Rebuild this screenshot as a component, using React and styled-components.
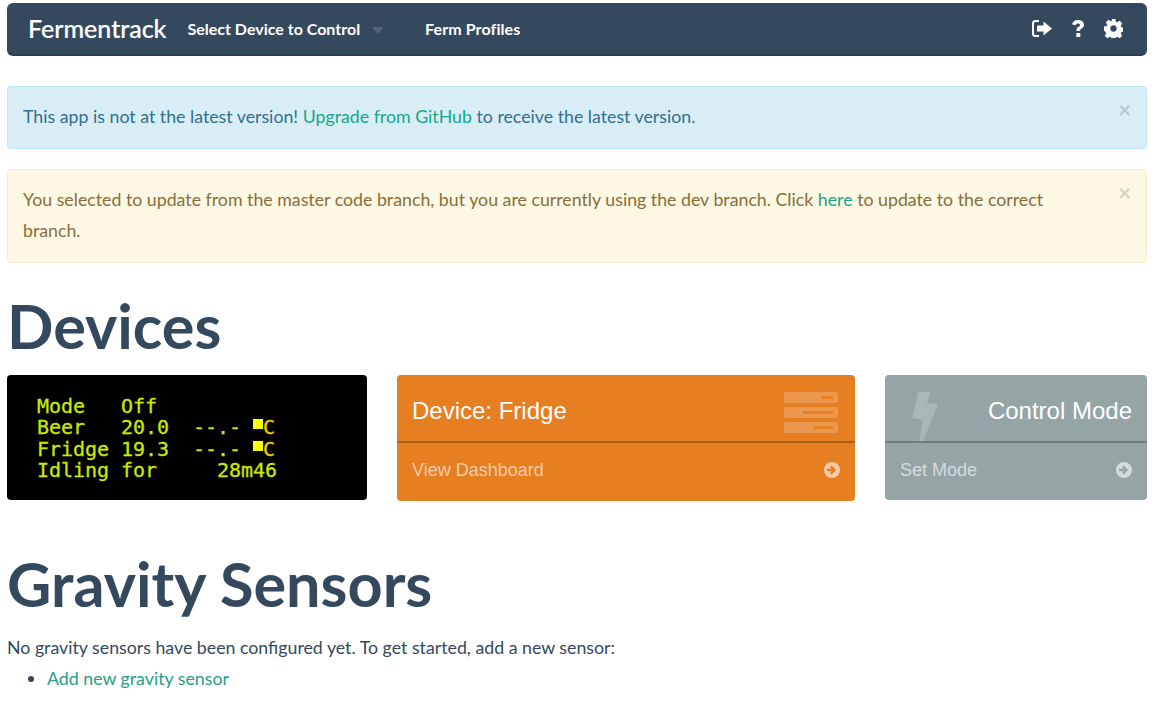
import React from "react";
import styled, { createGlobalStyle } from "styled-components";

const Global = createGlobalStyle`
  html, body { margin: 0; padding: 0; background: #fff; }
  body { font-family: Lato, "Liberation Sans", sans-serif; font-size: 17.75px; line-height: 31px; color: #34495e; }
  * { box-sizing: border-box; }
`;
const Page = styled.div`
  width: 1140px;
  margin-left: 7px;
  padding-top: 3px;
`;
const Navbar = styled.nav`
  display: flex;
  align-items: center;
  height: 53px;
  margin-bottom: 30px;
  background: #34495e;
  border-bottom: 2px solid #2c3e50;
  border-radius: 6px;
  padding: 0 24px 0 21px;
  color: #fff;
`;
const Brand = styled.a`
  font-size: 25px;
  font-weight: 500;
  margin-right: 21px;
  -webkit-text-stroke: 0.2px #fff;
`;
const NavLink = styled.a`
  font-size: 16px;
  font-weight: 700;
  line-height: 20px;
  letter-spacing: ${p => p.$spacing || 0}px;
`;
const Caret = styled.span`
  width: 0;
  height: 0;
  margin: 4px 41px 0 12px;
  border-left: 6px solid transparent;
  border-right: 6px solid transparent;
  border-top: 7px solid #536477;
`;
const NavIcons = styled.div`
  margin-left: auto;
  display: flex;
  align-items: center;
  gap: 20px;
`;
const Alert = styled.div`
  position: relative;
  margin-bottom: 20px;
  padding: 14px 48px 16px 15px;
  border-radius: 4px;
  border: 1px solid ${p => p.$border};
  background: ${p => p.$bg};
  color: ${p => p.$color};
  a { color: #18a689; }
`;
const Close = styled.span`
  position: absolute;
  top: 8px;
  right: 15px;
  font-size: 22px;
  line-height: 30px;
  font-weight: 700;
  color: ${p => p.$color};
`;
const Heading = styled.h1`
  margin: ${p => p.$top}px 0 ${p => p.$bottom}px;
  font-size: 61.2px;
  line-height: 66px;
  font-weight: 700;
  color: #34495e;
`;
const CardRow = styled.div`
  display: grid;
  grid-template-columns: 360px 458px 262px;
  column-gap: 30px;
  align-items: start;
`;
const Lcd = styled.div`
  height: 125px;
  background: #000;
  border-radius: 4px;
  padding: 21px 0 0 30px;
  font-family: "DejaVu Sans Mono", "Liberation Mono", monospace;
  font-size: 20px;
  line-height: 21.3px;
  letter-spacing: -0.04px;
  color: #cbe800;
  -webkit-text-stroke: 0.3px #cbe800;
  white-space: pre;
`;
const LcdLine = styled.div`
  height: 21.3px;
`;
const Degree = styled.span`
  display: inline-block;
  width: 10px;
  height: 10px;
  background: #ffff00;
  vertical-align: 5px;
`;
const Unit = styled.span`
  color: #f0d000;
  -webkit-text-stroke: 0.3px #f0d000;
`;
const Panel = styled.div`
  height: ${p => p.$h}px;
  background: ${p => p.$bg};
  border-radius: 4px;
  color: #fff;
  font-family: "Liberation Sans", Arial, sans-serif;
  overflow: hidden;
`;
const PanelHead = styled.div`
  display: flex;
  justify-content: space-between;
  height: 68px;
  padding: 17px ${p => p.$right}px 0 ${p => p.$left}px;
  border-bottom: 2px solid rgba(0,0,0,.25);
  font-size: 24px;
  line-height: 38px;
`;
const PanelFoot = styled.div`
  display: flex;
  align-items: center;
  justify-content: space-between;
  height: 54px;
  padding: 0 15px;
  font-size: 18px;
  color: rgba(255,255,255,.6);
`;
const Text = styled.p`
  margin: 0;
`;
const Bullets = styled.ul`
  margin: 0;
  padding-left: 40px;
  a { color: #24a088; }
`;
const ServerSvg = styled.svg`
  flex: none;
`;
const BoltSvg = styled.svg`
  flex: none;
`;

const ExitIcon = () => (
  <svg width="20" height="17" viewBox="0 0 20 17" fill="#fff">
    <path d="M7 0H3.5A3.5 3.5 0 0 0 0 3.5v10A3.5 3.5 0 0 0 3.5 17H7v-2H3.5A1.5 1.5 0 0 1 2 13.5v-10A1.5 1.5 0 0 1 3.5 2H7z" />
    <path d="M11.5 1.5 20 8.5l-8.500 7v-4H5v-6h6.500z" />
  </svg>
);
const HelpIcon = () => (
  <svg width="12" height="17" viewBox="0 0 12 17" fill="#fff">
    <path d="M0 4.200C.9 1.500 3 0 6 0c3.300 0 6 2 6 4.700 0 2-1.100 3-2.500 3.900-1 .6-1.300 1-1.300 1.900v.5H4.500v-.9c0-1.700.6-2.500 2-3.400.9-.6 1.600-1 1.600-1.800 0-.9-.9-1.500-2-1.500-1.200 0-2 .6-2.700 1.900z" />
    <rect x="4.300" y="13" width="4" height="4" rx=".5" />
  </svg>
);
const GearIcon = () => (
  <svg width="19" height="19" viewBox="0 0 18 18">
    <path fill="#fff" d="M7.200 0h3.600l.5 2.500 1.400.6 2.100-1.400 2.500 2.500-1.400 2.100.6 1.400 2.500.5v3.600l-2.500.5-.6 1.400 1.400 2.100-2.500 2.500-2.100-1.400-1.400.6-.5 2.500H7.200l-.5-2.500-1.400-.6-2.100 1.400-2.500-2.500 1.400-2.100-.6-1.400L0 10.800V7.200l2.500-.5.600-1.400-1.400-2.100 2.500-2.500 2.100 1.400 1.400-.6z" />
    <circle cx="9" cy="9" r="3" fill="#34495e" />
  </svg>
);
const ArrowCircle = () => (
  <svg width="16" height="16" viewBox="0 0 16 16">
    <path
      fillRule="evenodd"
      fill="#fff"
      fillOpacity=".6"
      d="M8 0a8 8 0 1 1 0 16A8 8 0 0 1 8 0zM3 6.800v2.400h4.800L6 11l1.600 1.600L12.200 8 7.600 3.400 6 5 7.800 6.800z"
    />
  </svg>
);
const ServerIcon = () => (
  <ServerSvg width="54" height="41" viewBox="0 0 54 41">
    <g fill="#fff" fillOpacity=".2" fillRule="evenodd">
      <path d="M1.500 0h51A1.500 1.500 0 0 1 54 1.500v8a1.500 1.500 0 0 1-1.500 1.500h-51A1.500 1.500 0 0 1 0 9.500v-8A1.500 1.500 0 0 1 1.500 0zM38 4v3h11V4z" />
      <path d="M1.500 15h51a1.500 1.500 0 0 1 1.500 1.500v8a1.500 1.500 0 0 1-1.500 1.500h-51A1.500 1.500 0 0 1 0 24.500v-8A1.500 1.500 0 0 1 1.500 15zM19 19v3h30v-3z" />
      <path d="M1.500 30h51a1.500 1.500 0 0 1 1.500 1.500v8a1.500 1.500 0 0 1-1.500 1.500h-51A1.500 1.500 0 0 1 0 39.500v-8A1.500 1.500 0 0 1 1.500 30zM30 34v3h19v-3z" />
    </g>
  </ServerSvg>
);
const BoltIcon = () => (
  <BoltSvg width="26" height="49" viewBox="0 0 26 49">
    <path d="M6 0h12l-3 11 11 1-15 37H7l4-21-11-2z" fill="#fff" fillOpacity=".2" />
  </BoltSvg>
);

export default function App() {
  return (
    <Page>
      <Global />
      <Navbar>
        <Brand>Fermentrack</Brand>
        <NavLink>Select Device to Control</NavLink>
        <Caret />
        <NavLink $spacing={0.1}>Ferm Profiles</NavLink>
        <NavIcons>
          <ExitIcon />
          <HelpIcon />
          <GearIcon />
        </NavIcons>
      </Navbar>
      <Alert $bg="#d9edf7" $border="#bce8f1" $color="#31708f">
        <Close $color="#b3c9d4">×</Close>
        This app is not at the latest version! <a>Upgrade from GitHub</a> to receive the latest version.
      </Alert>
      <Alert $bg="#fcf8e3" $border="#faebcc" $color="#8a6d3b">
        <Close $color="#d8d2bd">×</Close>
        You selected to update from the master code branch, but you are currently using the dev branch. Click <a>here</a> to update to the correct branch.
      </Alert>
      <Heading $top={30} $bottom={16}>Devices</Heading>
      <CardRow>
        <Lcd>
          <LcdLine>Mode   Off</LcdLine>
          <LcdLine>Beer   20.0  --.- <Degree /><Unit>C</Unit></LcdLine>
          <LcdLine>Fridge 19.3  --.- <Degree /><Unit>C</Unit></LcdLine>
          <LcdLine>Idling for     28m46</LcdLine>
        </Lcd>
        <Panel $bg="#e67e22" $h={126}>
          <PanelHead $left={15} $right={17}>Device: Fridge<ServerIcon /></PanelHead>
          <PanelFoot>View Dashboard<ArrowCircle /></PanelFoot>
        </Panel>
        <Panel $bg="#95a5a6" $h={125}>
          <PanelHead $left={27} $right={15}><BoltIcon />Control Mode</PanelHead>
          <PanelFoot>Set Mode<ArrowCircle /></PanelFoot>
        </Panel>
      </CardRow>
      <Heading $top={50} $bottom={15}>Gravity Sensors</Heading>
      <Text>No gravity sensors have been configured yet. To get started, add a new sensor:</Text>
      <Bullets>
        <li><a>Add new gravity sensor</a></li>
      </Bullets>
    </Page>
  );
}
